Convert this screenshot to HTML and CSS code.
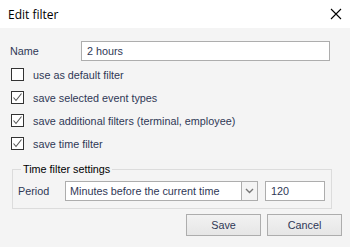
FILE: index.html
```html
<!DOCTYPE html>
<html lang="en">
<head>
    <meta charset="UTF-8">
    <title>Edit filter</title>
    <link rel="stylesheet" href="styles.css">
</head>
<body>
    <div class="dialog">
        <div class="titlebar">
            <span class="title">Edit filter</span>
            <svg class="close" width="12" height="12" viewBox="0 0 12 12">
                <path d="M1 1 L11 11 M11 1 L1 11" stroke="#000" stroke-width="1.1" fill="none"/>
            </svg>
        </div>
        <div class="content">
            <div class="name-row">
                <label for="name">Name</label>
                <input type="text" id="name" value="2 hours">
            </div>

            <div class="checks">
                <div class="check-row">
                    <span class="box"></span>
                    <span>use as default filter</span>
                </div>
                <div class="check-row">
                    <span class="box checked"><svg width="11" height="11" viewBox="0 0 11 11"><path d="M1.5 5.5 L4 8.5 L9.5 1.5" stroke="#555" stroke-width="1.1" fill="none"/></svg></span>
                    <span>save selected event types</span>
                </div>
                <div class="check-row">
                    <span class="box checked"><svg width="11" height="11" viewBox="0 0 11 11"><path d="M1.5 5.5 L4 8.5 L9.5 1.5" stroke="#555" stroke-width="1.1" fill="none"/></svg></span>
                    <span>save additional filters (terminal, employee)</span>
                </div>
                <div class="check-row">
                    <span class="box checked"><svg width="11" height="11" viewBox="0 0 11 11"><path d="M1.5 5.5 L4 8.5 L9.5 1.5" stroke="#555" stroke-width="1.1" fill="none"/></svg></span>
                    <span>save time filter</span>
                </div>
            </div>

            <fieldset class="group">
                <legend>Time filter settings</legend>
                <div class="period-row">
                    <span class="period-label">Period</span>
                    <div class="select">
                        <span class="select-text">Minutes before the current time</span>
                        <span class="select-arrow">
                            <svg width="9" height="6" viewBox="0 0 9 6"><path d="M1 1 L4.5 4.5 L8 1" stroke="#777" stroke-width="1.4" fill="none"/></svg>
                        </span>
                    </div>
                    <input type="text" class="minutes" value="120">
                </div>
            </fieldset>

            <div class="buttons">
                <button>Save</button>
                <button>Cancel</button>
            </div>
        </div>
    </div>
</body>
</html>
```

FILE: styles.css
```css
body {
    margin: 0;
    font-family: "Liberation Sans", Arial, sans-serif;
    font-size: 10.8px;
    color: #2f3856;
}

.dialog {
    width: 350px;
    height: 247px;
    display: flex;
    flex-direction: column;
    background-color: #f4f4f4;
}

.titlebar {
    height: 28px;
    background-color: #fff;
    display: flex;
    align-items: center;
    justify-content: space-between;
    padding: 0 8px;
}

.title {
    font-family: "Open Sans", sans-serif;
    font-size: 12px;
    color: #000;
}

.content {
    flex: 1;
    padding: 13px 8px 0 10px;
}

.name-row {
    display: flex;
    align-items: center;
    height: 20px;
}

.name-row label {
    width: 71px;
}

input {
    box-sizing: border-box;
    height: 20px;
    border: 1px solid #adadad;
    background-color: #fff;
    font: inherit;
    color: inherit;
    padding: 0 5px;
    margin: 0;
    outline: none;
}

#name {
    width: 249px;
}

.checks {
    margin-top: 2px;
}

.check-row {
    display: flex;
    align-items: center;
    height: 23px;
    margin-left: 1px;
}

.box {
    box-sizing: border-box;
    width: 13px;
    height: 13px;
    border: 1px solid #333;
    background-color: #fff;
    margin-right: 9px;
    display: flex;
    align-items: center;
    justify-content: center;
}

.group {
    margin: 8px 10px 0 2px;
    padding: 0 4px 7px 5px;
    border: 1px solid #dcdcdc;
}

.group legend {
    padding: 0 2px;
    margin-left: 3px;
    color: #000;
}

.period-row {
    display: flex;
    align-items: center;
    margin-top: 6px;
}

.period-label {
    width: 47px;
}

.select {
    box-sizing: border-box;
    width: 193px;
    height: 20px;
    border: 1px solid #adadad;
    background-color: #fff;
    display: flex;
    align-items: center;
    margin-right: 7px;
}

.select-text {
    flex: 1;
    padding-left: 4px;
}

.select-arrow {
    width: 15px;
    height: 18px;
    border-left: 1px solid #adadad;
    background-color: #f4f4f4;
    display: flex;
    align-items: center;
    justify-content: center;
}

.minutes {
    width: 60px;
}

.buttons {
    display: flex;
    justify-content: flex-end;
    gap: 6px;
    margin-top: 5px;
}

button {
    width: 75px;
    height: 22px;
    border: 1px solid #adadad;
    background: linear-gradient(#f2f2f2, #e6e6e6);
    font: inherit;
    color: inherit;
    padding: 0;
}
```
